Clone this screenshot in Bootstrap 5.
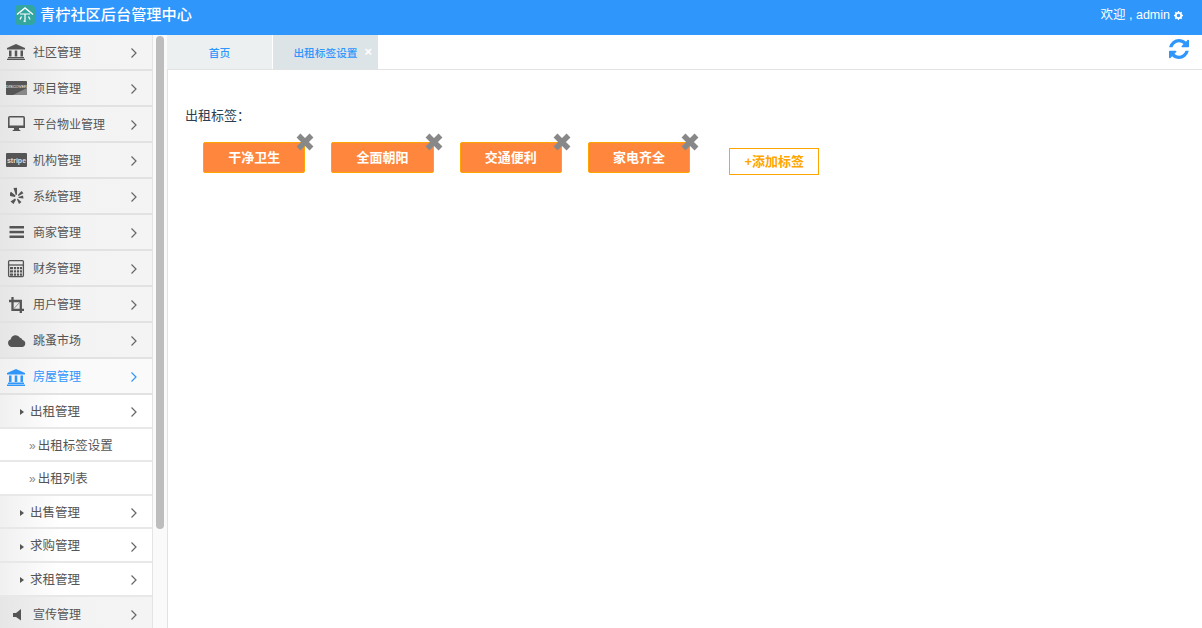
<!DOCTYPE html>
<html lang="zh">
<head>
<meta charset="utf-8">
<title>青柠社区后台管理中心</title>
<link href="https://cdn.jsdelivr.net/npm/bootstrap@5.3.0/dist/css/bootstrap.min.css" rel="stylesheet">
<style>
html,body{height:100%;overflow:hidden}
body{font-family:"Liberation Sans","Noto Sans CJK SC",sans-serif;font-size:12px;color:#333;background:#fff}
.topbar{height:35px;background:#2f96fb;color:#fff;padding:0 19px 5px 15px}
.brand-text{font-size:15.2px;font-weight:500;margin-left:5px}
.user-text{font-size:12.5px}
.shell{height:593px}
.side{width:153px;border-right:1px solid #e4e4e4;flex:none;overflow:hidden}
.side-row{height:36px;border-bottom:2px solid #e2e2e2;background:linear-gradient(90deg,#e6e6e6,#f3f3f3 45%,#f4f4f4);color:#555;padding:2px 14px 0 5px}
.side-row.on{background:linear-gradient(90deg,#f0f0f0,#fafafa 40%);color:#2f96fb}
.ico{width:24px;height:20px;flex:none;margin-right:4px;display:block}
.sub-row{height:33.6px;border-bottom:2px solid #e8e8e8;background:linear-gradient(90deg,#f0f0f0,#fff 40%);color:#555;font-size:12.5px;padding:3px 14px 0 20px}
.sub-row.deep{padding-left:29px;background:#fff}
.tri{width:0;height:0;border-left:4px solid #555;border-top:3.5px solid transparent;border-bottom:3.5px solid transparent;margin-right:6px}
.dbl{font-size:12px;color:#888;margin-right:2px;line-height:1}
.chev{width:8px;height:14px;flex:none;margin-left:auto}
.track{width:14px;flex:none;background:#fafafa;padding:1px 3px 0 3px}
.thumb{height:493px;background:#bdbdbd;border-radius:4px;width:8px}
.tabs{height:35px;border-bottom:1px solid #e2e2e2;padding-right:13px}
.tab-a{width:105px;height:34px;background:#ecf0f1;color:#2f96fb;font-size:10.7px;font-weight:500;margin-right:1px;padding-top:3px}
.tab-b{width:105px;height:34px;background:#dde4e7;color:#2f96fb;font-size:10.7px;font-weight:500;position:relative;padding-top:3px}
.tab-x{position:absolute;top:10px;right:6px;color:#fff;font-size:13px;line-height:1;font-weight:700}
.pane{height:558px;border-left:1px solid #e2e2e2}
.label-line{padding:36px 0 0 17px;font-size:13px;color:#2c3e50;line-height:18px}
.colon-mark{font-family:"Noto Sans CJK TC",sans-serif}
.tag-line{padding:17px 0 0 35px;gap:26px;align-items:flex-start}
.tag-chip{position:relative;width:102.3px;height:31px;background:#ff873d;border:1px solid #ffa500;border-radius:2px;color:#fff;font-size:13px;font-weight:700}
.tag-del{position:absolute;top:-10px;right:-10px;width:18px;height:18px}
.add-tag{width:90px;height:27px;border:1px solid #ffa500;color:#ffa500;font-size:13px;font-weight:700;margin:6px 0 0 13px;padding-top:1px}
</style>
</head>
<body>
<header class="topbar d-flex align-items-center justify-content-between">
  <div class="d-flex align-items-center">
    <svg width="20" height="20" viewBox="0 0 20 20"><rect width="20" height="20" rx="4" fill="#34a6a0"/><path d="M2 9.500 10 3l8 6.500" fill="none" stroke="#fff" stroke-width="1.400"/><path d="M5 9h10M10 9v7.500l-1.500-.5M6.500 11.500 5 14.500M13.500 11.500l1.500 3" fill="none" stroke="#fff" stroke-width="1.200"/></svg>
    <span class="brand-text">青柠社区后台管理中心</span>
  </div>
  <div class="d-flex align-items-center user-text">欢迎 , admin
    <svg class="ms-1" width="9" height="9" viewBox="0 0 10 10"><circle cx="5" cy="5" r="3" fill="none" stroke="#fff" stroke-width="2"/><path d="M5 0v2M5 8v2M0 5h2M8 5h2M1.500 1.500 3 3M7 7l1.500 1.500M8.500 1.500 7 3M3 7 1.500 8.500" stroke="#fff" stroke-width="1.500"/></svg>
  </div>
</header>
<div class="shell d-flex">
  <nav class="side">
    <div class="side-row d-flex align-items-center">
      <svg class="ico" viewBox="0 0 24 20" fill="#555"><path d="M11 1 20 5v1.500H2V5zM4 7.500h2.500v6H4zM9.750 7.500h2.500v6h-2.500zM15.500 7.500H18v6h-2.500zM3 14h16v1.300H3zM2 15.800h18V17H2z"/></svg>社区管理
      <svg class="chev" viewBox="0 0 8 14"><path d="m1.500 2.500 4.500 4.500-4.500 4.500" fill="none" stroke="#666" stroke-width="1.200"/></svg>
    </div>
    <div class="side-row d-flex align-items-center">
      <svg class="ico" viewBox="0 0 24 20"><rect x="1" y="2" width="21" height="14" rx="1" fill="#555"/><path d="M8 16 22 9v6a1 1 0 0 1-1 1z" fill="#888"/><text x="11.500" y="8.500" font-size="4" fill="#fff" text-anchor="middle" font-family="Liberation Sans">DISCOVER</text></svg>项目管理
      <svg class="chev" viewBox="0 0 8 14"><path d="m1.500 2.500 4.500 4.500-4.500 4.500" fill="none" stroke="#666" stroke-width="1.200"/></svg>
    </div>
    <div class="side-row d-flex align-items-center">
      <svg class="ico" viewBox="0 0 24 20"><rect x="3.800" y="1.800" width="15.400" height="10.400" rx="1" fill="none" stroke="#555" stroke-width="1.600"/><rect x="3" y="10.500" width="17" height="2.500" fill="#555"/><path d="M9 13h5v1.500l2 1.500H7l2-1.500z" fill="#555"/></svg>平台物业管理
      <svg class="chev" viewBox="0 0 8 14"><path d="m1.500 2.500 4.500 4.500-4.500 4.500" fill="none" stroke="#666" stroke-width="1.200"/></svg>
    </div>
    <div class="side-row d-flex align-items-center">
      <svg class="ico" viewBox="0 0 24 20"><rect x="1" y="2" width="21" height="14" rx="1" fill="#555"/><text x="11.500" y="11.500" font-size="7" font-weight="700" fill="#ddd" text-anchor="middle" font-family="Liberation Sans">stripe</text></svg>机构管理
      <svg class="chev" viewBox="0 0 8 14"><path d="m1.500 2.500 4.500 4.500-4.500 4.500" fill="none" stroke="#666" stroke-width="1.200"/></svg>
    </div>
    <div class="side-row d-flex align-items-center">
      <svg class="ico" viewBox="0 0 24 20" fill="#555"><path d="M8.500 1 12 .8V7.500l-1.200.8zM5 6l1-1.200 4.500 3.700-.5 1.500-5-1zM5.500 14.500l4.500-3 1 1.200-2.500 4.300zM12.500 11.500l4 3.500-2.500 2-2-4.500zM13 10l5-1.500.5 3-4.500-.5zM12.800 8 16.500 4l2 2.300-5 2.700z"/></svg>系统管理
      <svg class="chev" viewBox="0 0 8 14"><path d="m1.500 2.500 4.500 4.500-4.500 4.500" fill="none" stroke="#666" stroke-width="1.200"/></svg>
    </div>
    <div class="side-row d-flex align-items-center">
      <svg class="ico" viewBox="0 0 24 20" fill="#555"><rect x="4.500" y="3" width="14.500" height="2.500"/><rect x="4.500" y="7.800" width="14.500" height="2.500"/><rect x="4.500" y="12.500" width="14.500" height="2.500"/></svg>商家管理
      <svg class="chev" viewBox="0 0 8 14"><path d="m1.500 2.500 4.500 4.500-4.500 4.500" fill="none" stroke="#666" stroke-width="1.200"/></svg>
    </div>
    <div class="side-row d-flex align-items-center">
      <svg class="ico" viewBox="0 0 24 20"><rect x="3.600" y="1.600" width="14.800" height="16" rx="1" fill="none" stroke="#555" stroke-width="1.300"/><path d="M3.500 6h15" stroke="#555" stroke-width="1.300"/><path d="M5 8h12v2.300H5zM5 11.300h12v2.300H5zM5 14.600h12v2.200H5z" fill="#555"/><path d="M8.500 8v9M11.500 8v9M14.500 8v9" stroke="#f3f3f3" stroke-width=".8"/></svg>财务管理
      <svg class="chev" viewBox="0 0 8 14"><path d="m1.500 2.500 4.500 4.500-4.500 4.500" fill="none" stroke="#666" stroke-width="1.200"/></svg>
    </div>
    <div class="side-row d-flex align-items-center">
      <svg class="ico" viewBox="0 0 24 20"><path d="M7.500 2v12.800H19M4 6h11.800v12" fill="none" stroke="#555" stroke-width="2.300"/><path d="m8 14.500 7.500-8" stroke="#777" stroke-width=".8"/></svg>用户管理
      <svg class="chev" viewBox="0 0 8 14"><path d="m1.500 2.500 4.500 4.500-4.500 4.500" fill="none" stroke="#666" stroke-width="1.200"/></svg>
    </div>
    <div class="side-row d-flex align-items-center">
      <svg class="ico" viewBox="0 0 24 20" fill="#555"><path d="M7 16a4 4 0 0 1-1.200-7.800A5 5 0 0 1 15 6.800a3.300 3.300 0 0 1 2.500 2.200 3.600 3.600 0 0 1 0 7z"/></svg>跳蚤市场
      <svg class="chev" viewBox="0 0 8 14"><path d="m1.500 2.500 4.500 4.500-4.500 4.500" fill="none" stroke="#666" stroke-width="1.200"/></svg>
    </div>
    <div class="side-row on d-flex align-items-center">
      <svg class="ico" viewBox="0 0 24 20" fill="#2f96fb"><path d="M11 2 20 6v1.500H2V6zM4 8.500h2.500v6.500H4zM9.750 8.500h2.500v6.500h-2.500zM15.500 8.500H18v6.500h-2.500zM3 15.500h16v1.400H3zM2 17.500h18V19H2z"/></svg>房屋管理
      <svg class="chev" viewBox="0 0 8 14"><path d="m1.500 2.500 4.500 4.500-4.500 4.500" fill="none" stroke="#2f96fb" stroke-width="1.200"/></svg>
    </div>
    <div class="sub-row d-flex align-items-center"><span class="tri"></span>出租管理
      <svg class="chev" viewBox="0 0 8 14"><path d="m1.500 2.500 4.500 4.500-4.500 4.500" fill="none" stroke="#666" stroke-width="1.200"/></svg></div>
    <div class="sub-row deep d-flex align-items-center"><span class="dbl">»</span>出租标签设置</div>
    <div class="sub-row deep d-flex align-items-center"><span class="dbl">»</span>出租列表</div>
    <div class="sub-row d-flex align-items-center"><span class="tri"></span>出售管理
      <svg class="chev" viewBox="0 0 8 14"><path d="m1.500 2.500 4.500 4.500-4.500 4.500" fill="none" stroke="#666" stroke-width="1.200"/></svg></div>
    <div class="sub-row d-flex align-items-center"><span class="tri"></span>求购管理
      <svg class="chev" viewBox="0 0 8 14"><path d="m1.500 2.500 4.500 4.500-4.500 4.500" fill="none" stroke="#666" stroke-width="1.200"/></svg></div>
    <div class="sub-row d-flex align-items-center"><span class="tri"></span>求租管理
      <svg class="chev" viewBox="0 0 8 14"><path d="m1.500 2.500 4.500 4.500-4.500 4.500" fill="none" stroke="#666" stroke-width="1.200"/></svg></div>
    <div class="side-row d-flex align-items-center">
      <svg class="ico" viewBox="0 0 24 20" fill="#555"><path d="M8 8h3l5-4v11.500l-5-3.500H8z"/></svg>宣传管理
      <svg class="chev" viewBox="0 0 8 14"><path d="m1.500 2.500 4.500 4.500-4.500 4.500" fill="none" stroke="#666" stroke-width="1.200"/></svg>
    </div>
  </nav>
  <div class="track"><div class="thumb"></div></div>
  <main class="flex-grow-1">
    <div class="tabs d-flex align-items-start">
      <div class="tab-a d-flex align-items-center justify-content-center">首页</div>
      <div class="tab-b d-flex align-items-center justify-content-center">出租标签设置<span class="tab-x">×</span></div>
      <svg class="ms-auto mt-1" width="20" height="20" viewBox="0 0 1536 1536"><path fill="#2f96fb" d="M1511 928q0 5-1 7-64 268-268 434.500t-478 166.500q-146 0-282.500-55t-243.500-157l-129 129q-19 19-45 19t-45-19-19-45v-448q0-26 19-45t45-19h448q26 0 45 19t19 45-19 45l-137 137q71 66 161 102t187 36q134 0 250-65t186-179q11-17 53-117 8-23 30-23h192q13 0 22.500 9.500t9.500 22.500zm25-800v448q0 26-19 45t-45 19h-448q-26 0-45-19t-19-45 19-45l138-138q-148-137-349-137-134 0-250 65t-186 179q-11 17-53 117-8 23-30 23h-199q-13 0-22.500-9.500t-9.500-22.500v-7q65-268 270-434.500t480-166.500q146 0 284 55.500t245 156.500l130-129q19-19 45-19t45 19 19 45z"/></svg>
    </div>
    <div class="pane">
      <div class="label-line">出租标签<span class="colon-mark">：</span></div>
      <div class="tag-line d-flex">
        <div class="tag-chip d-flex align-items-center justify-content-center">干净卫生<svg class="tag-del" viewBox="0 0 18 18"><path d="m2.500 2.500 13 13M15.500 2.500l-13 13" stroke="#888" stroke-width="5.500"/></svg></div>
        <div class="tag-chip d-flex align-items-center justify-content-center">全面朝阳<svg class="tag-del" viewBox="0 0 18 18"><path d="m2.500 2.500 13 13M15.500 2.500l-13 13" stroke="#888" stroke-width="5.500"/></svg></div>
        <div class="tag-chip d-flex align-items-center justify-content-center">交通便利<svg class="tag-del" viewBox="0 0 18 18"><path d="m2.500 2.500 13 13M15.500 2.500l-13 13" stroke="#888" stroke-width="5.500"/></svg></div>
        <div class="tag-chip d-flex align-items-center justify-content-center">家电齐全<svg class="tag-del" viewBox="0 0 18 18"><path d="m2.500 2.500 13 13M15.500 2.500l-13 13" stroke="#888" stroke-width="5.500"/></svg></div>
        <div class="add-tag d-flex align-items-center justify-content-center">+添加标签</div>
      </div>
    </div>
  </main>
</div>
<script src="https://cdn.jsdelivr.net/npm/bootstrap@5.3.0/dist/js/bootstrap.bundle.min.js"></script>
</body>
</html>
